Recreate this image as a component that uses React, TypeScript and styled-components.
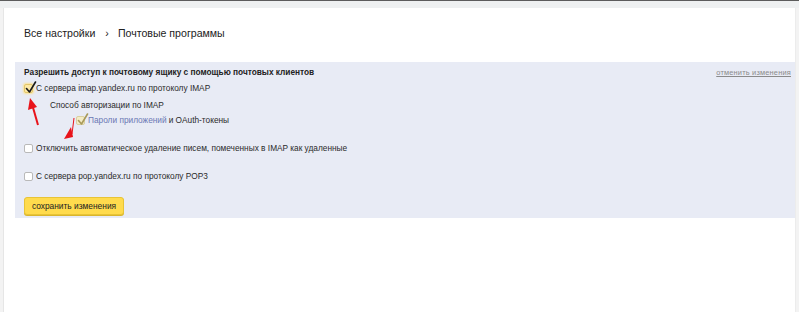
import React from 'react';
import styled, { createGlobalStyle } from 'styled-components';

const GlobalStyle = createGlobalStyle`
  html, body {
    margin: 0;
    padding: 0;
    background: #ffffff;
    font-family: "Liberation Sans", Arial, sans-serif;
    color: #222;
  }
`;

const Page = styled.div`
  width: 799px;
  height: 312px;
  display: flex;
  flex-direction: column;
  overflow: hidden;
`;

const TopBar = styled.div`
  height: 8px;
  border-top: 1px solid #5c5c5c;
  background: #eef0f1;
  box-sizing: border-box;
`;

const Body = styled.div`
  flex: 1;
  display: flex;
`;

const Rail = styled.div<{ $side: 'left' | 'right' }>`
  width: 3px;
  background: #f3f3f3;
  ${(p) => (p.$side === 'left' ? 'border-right: 1px solid #e6e6e6;' : 'border-left: 1px solid #ececec;')}
`;

const Main = styled.div`
  flex: 1;
  padding: 0 0 0 11px;
`;

const Breadcrumbs = styled.div`
  display: flex;
  align-items: center;
  height: 50px;
  padding: 0 0 4px 9px;
  font-size: 10.6px;
  color: #222;
`;

const Crumb = styled.span``;

const Sep = styled.span`
  margin: 0 9px 0 10px;
`;

const Panel = styled.section`
  background: #e8ebf5;
  padding: 4px 4px 3px 9px;
  display: flex;
  flex-direction: column;
  font-size: 8.3px;
  color: #2a2a2a;
  position: relative;
`;

const PanelHead = styled.div`
  display: flex;
  justify-content: space-between;
  align-items: center;
  height: 12px;
`;

const Title = styled.div`
  font-weight: bold;
  font-size: 8.3px;
  color: #222;
`;

const Cancel = styled.a`
  font-size: 7.4px;
  color: #8a8a8a;
  text-decoration: underline;
  letter-spacing: 0.2px;
`;

const Row = styled.label<{ $indent?: number; $gap?: number }>`
  display: flex;
  align-items: center;
  height: 12px;
  margin-left: ${(p) => p.$indent ?? 0}px;
  margin-top: ${(p) => p.$gap ?? 0}px;
`;

const Box = styled.span<{ $checked?: boolean; $muted?: boolean }>`
  width: 9px;
  height: 9px;
  box-sizing: border-box;
  border: 1px solid ${(p) => (p.$checked ? (p.$muted ? '#d9cfa0' : '#e2c66b') : '#b9b9b9')};
  border-radius: 2px;
  background: ${(p) => (p.$checked ? (p.$muted ? '#f4ecc6' : '#fde9a6') : '#fff')};
  box-shadow: ${(p) => (p.$checked && !p.$muted ? '0 0 2px 1px #fbe39a' : 'none')};
  margin-right: 3px;
  position: relative;
  flex: none;

  svg {
    position: absolute;
    left: 0;
    top: -4px;
  }
`;

const Text = styled.span``;

const Caption = styled.div`
  margin: 5px 0 0 26px;
  height: 12px;
  display: flex;
  align-items: center;
`;

const AppLink = styled.a`
  color: #6b78b4;
  margin-right: 2px;
`;

const SaveButton = styled.button`
  margin-top: 15px;
  align-self: flex-start;
  width: 100px;
  height: 18px;
  padding: 0;
  font-family: "Liberation Sans", Arial, sans-serif;
  font-size: 8.4px;
  color: #222;
  background: #ffdb4d;
  border: 1px solid #e8c436;
  border-radius: 3px;
  box-shadow: 0 1px 0 #d9b52d;
`;

const Check = ({ color }: { color: string }) => (
  <svg width="12" height="13" viewBox="0 0 12 13">
    <path d="M1.5 7.5 L4.5 11 L10.5 1" fill="none" stroke={color} strokeWidth="1.6" strokeLinecap="round" strokeLinejoin="round" />
  </svg>
);

const Arrow = styled.svg`
  position: absolute;
  pointer-events: none;
`;

export default function App() {
  return (
    <Page>
      <GlobalStyle />
      <TopBar />
      <Body>
        <Rail $side="left" />
        <Main>
          <Breadcrumbs>
            <Crumb>Все настройки</Crumb>
            <Sep>›</Sep>
            <Crumb>Почтовые программы</Crumb>
          </Breadcrumbs>
          <Panel>
            <PanelHead>
              <Title>Разрешить доступ к почтовому ящику с помощью почтовых клиентов</Title>
              <Cancel>отменить изменения</Cancel>
            </PanelHead>
            <Row $gap={4}>
              <Box $checked>
                <Check color="#1a1a1a" />
              </Box>
              <Text>С сервера imap.yandex.ru по протоколу IMAP</Text>
            </Row>
            <Caption>Способ авторизации по IMAP</Caption>
            <Row $indent={52} $gap={3}>
              <Box $checked $muted>
                <Check color="#a89a5a" />
              </Box>
              <Text>
                <AppLink>Пароли приложений</AppLink>и OAuth-токены
              </Text>
            </Row>
            <Row $gap={16}>
              <Box />
              <Text>Отключить автоматическое удаление писем, помеченных в IMAP как удаленные</Text>
            </Row>
            <Row $gap={16}>
              <Box />
              <Text>С сервера pop.yandex.ru по протоколу POP3</Text>
            </Row>
            <SaveButton>сохранить изменения</SaveButton>

            <Arrow width="20" height="40" viewBox="0 0 20 40" style={{ left: 10, top: 32 }}>
              <line x1="13" y1="31" x2="7" y2="10" stroke="#e8131a" strokeWidth="2" />
              <polygon points="5,4 3,16 12,13" fill="#e8131a" />
            </Arrow>
            <Arrow width="20" height="30" viewBox="0 0 20 30" style={{ left: 45, top: 52 }}>
              <line x1="12" y1="20" x2="14" y2="4" stroke="#e8131a" strokeWidth="1" />
              <polygon points="11,13 4,25 13,23" fill="#e8131a" />
            </Arrow>
          </Panel>
        </Main>
        <Rail $side="right" />
      </Body>
    </Page>
  );
}
